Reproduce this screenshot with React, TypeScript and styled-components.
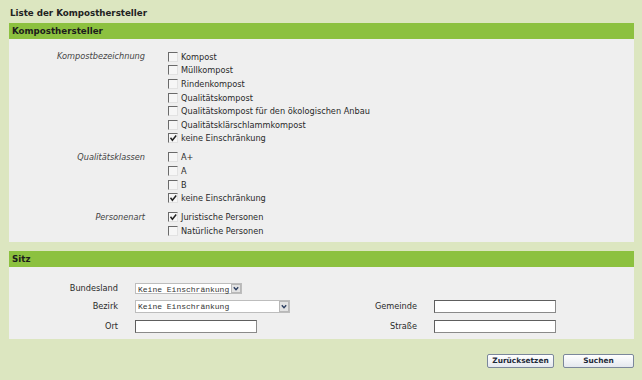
import React from 'react';
import styled, {createGlobalStyle} from 'styled-components';

const GlobalStyle = createGlobalStyle`
  html, body { margin: 0; padding: 0; background: #dce6c0; }
  body {
    font-family: "DejaVu Sans", Verdana, sans-serif;
    font-size: 8.2px;
    color: #2a2a2a;
  }
`;

const Page = styled.div`
  width: 642px;
  height: 380px;
  box-sizing: border-box;
  padding: 6px 8px 0 9px;
  background: #dce6c0;
`;

const Title = styled.h1`
  margin: 0 0 3px 1px;
  font-size: 8.7px;
  line-height: 14px;
  font-weight: bold;
  color: #222;
`;

const Section = styled.section<{ $gap?: number }>`
  margin-top: ${p => p.$gap || 0}px;
`;

const SectionHeader = styled.div`
  height: 16px;
  line-height: 16px;
  padding-left: 3px;
  background: #8cc13f;
  font-size: 8.7px;
  font-weight: bold;
  color: #1c1c1c;
`;

const Panel = styled.div`
  background: #efefef;
  padding: 11px 0 4px;
  display: flex;
  flex-direction: column;
  gap: 5.5px;
`;

const Group = styled.div`
  display: grid;
  grid-template-columns: 136px 1fr;
  column-gap: 23px;
`;

const GroupLabel = styled.div`
  text-align: right;
  font-style: italic;
  color: #444;
  line-height: 13.6px;
`;

const Options = styled.div`
  display: flex;
  flex-direction: column;
`;

const Option = styled.label`
  display: flex;
  align-items: center;
  gap: 3px;
  height: 13.6px;
  color: #2a2a2a;
`;

const Box = styled.span`
  position: relative;
  width: 10px;
  height: 10px;
  box-sizing: border-box;
  border-top: 1px solid #6a6a6a;
  border-left: 1px solid #6a6a6a;
  border-right: 1px solid #e2e2e2;
  border-bottom: 1px solid #e2e2e2;
  background: #f6f6f6;
  > svg {
    position: absolute;
    left: 0;
    top: 0;
  }
`;

const FieldGrid = styled.div`
  background: #efefef;
  padding: 13px 0 2px;
  display: grid;
  grid-template-columns: 126px 165px 134px 1fr;
  grid-template-rows: 17px 19px 21px;
  align-items: center;
`;

const FieldLabel = styled.div<{ $col: number }>`
  grid-column: ${p => p.$col};
  text-align: right;
  padding-right: 17px;
  color: #2a2a2a;
`;

const SelectWrap = styled.div<{ $w: number; $h: number }>`
  position: relative;
  width: ${p => p.$w}px;
  height: ${p => p.$h}px;
  box-sizing: border-box;
  border: 1px solid #bdbdbd;
  background: #fff;
  > select {
    appearance: none;
    width: 100%;
    height: 100%;
    border: none;
    outline: none;
    background: transparent;
    padding: 0 2px;
    font-family: "Liberation Mono", "Courier New", monospace;
    font-size: 8px;
    color: #333;
  }
`;

const Chevron = styled.span`
  position: absolute;
  right: 0;
  top: 0;
  bottom: 0;
  width: 10px;
  box-sizing: border-box;
  border: 1px solid #b8b8b8;
  background: #e3e3e3;
  display: flex;
  align-items: center;
  justify-content: center;
  pointer-events: none;
`;

const TextInput = styled.input<{ $w: number }>`
  width: ${p => p.$w}px;
  height: 13px;
  box-sizing: border-box;
  border: 1px solid #8a8a8a;
  border-top-color: #5e5e5e;
  border-left-color: #5e5e5e;
  background: #fff;
  padding: 0 2px;
  font-size: 8px;
  outline: none;
`;

const ButtonRow = styled.div`
  display: flex;
  justify-content: flex-end;
  gap: 9px;
  margin-top: 15px;
`;

const Button = styled.button<{ $w: number }>`
  width: ${p => p.$w}px;
  height: 14px;
  padding: 0;
  border: 1px solid #7b879b;
  border-radius: 2px;
  background: linear-gradient(#ffffff, #e4e8ee);
  font-family: "DejaVu Sans", Verdana, sans-serif;
  font-size: 7.4px;
  font-weight: bold;
  color: #1e2a3a;
`;

function Check({checked}: { checked?: boolean }) {
  return (
    <Box>
      {checked &&
        <svg width="9" height="9" viewBox="0 0 9 9">
          <path d="M1.5 3.8 L3.4 6.2 L7.2 1.6" fill="none" stroke="#222" strokeWidth="1.5"/>
        </svg>}
    </Box>
  );
}

function Select({w, h}: { w: number; h: number }) {
  return (
    <SelectWrap $w={w} $h={h}>
      <select defaultValue="all">
        <option value="all">Keine Einschränkung</option>
      </select>
      <Chevron>
        <svg width="6" height="5" viewBox="0 0 6 5">
          <path d="M0.8 1.2 L3 3.6 L5.2 1.2" fill="none" stroke="#2c3e60" strokeWidth="1.4"/>
        </svg>
      </Chevron>
    </SelectWrap>
  );
}

const groups = [
  {
    label: 'Kompostbezeichnung',
    items: ['Kompost', 'Müllkompost', 'Rindenkompost', 'Qualitätskompost',
      'Qualitätskompost für den ökologischen Anbau', 'Qualitätsklärschlammkompost', 'keine Einschränkung'],
    checked: ['keine Einschränkung']
  },
  {
    label: 'Qualitätsklassen',
    items: ['A+', 'A', 'B', 'keine Einschränkung'],
    checked: ['keine Einschränkung']
  },
  {
    label: 'Personenart',
    items: ['Juristische Personen', 'Natürliche Personen'],
    checked: ['Juristische Personen']
  }
];

export default function App() {
  return (
    <Page>
      <GlobalStyle/>
      <Title>Liste der Komposthersteller</Title>
      <Section>
        <SectionHeader>Komposthersteller</SectionHeader>
        <Panel>
          {groups.map(g =>
            <Group key={g.label}>
              <GroupLabel>{g.label}</GroupLabel>
              <Options>
                {g.items.map(item =>
                  <Option key={item}>
                    <Check checked={g.checked.includes(item)}/>
                    <span>{item}</span>
                  </Option>
                )}
              </Options>
            </Group>
          )}
        </Panel>
      </Section>
      <Section $gap={9}>
        <SectionHeader>Sitz</SectionHeader>
        <FieldGrid>
          <FieldLabel $col={1}>Bundesland</FieldLabel>
          <Select w={107} h={11}/>
          <FieldLabel $col={1}>Bezirk</FieldLabel>
          <Select w={155} h={13}/>
          <FieldLabel $col={3}>Gemeinde</FieldLabel>
          <TextInput $w={122}/>
          <FieldLabel $col={1}>Ort</FieldLabel>
          <TextInput $w={122}/>
          <FieldLabel $col={3}>Straße</FieldLabel>
          <TextInput $w={122}/>
        </FieldGrid>
      </Section>
      <ButtonRow>
        <Button $w={67}>Zurücksetzen</Button>
        <Button $w={71}>Suchen</Button>
      </ButtonRow>
    </Page>
  );
}
